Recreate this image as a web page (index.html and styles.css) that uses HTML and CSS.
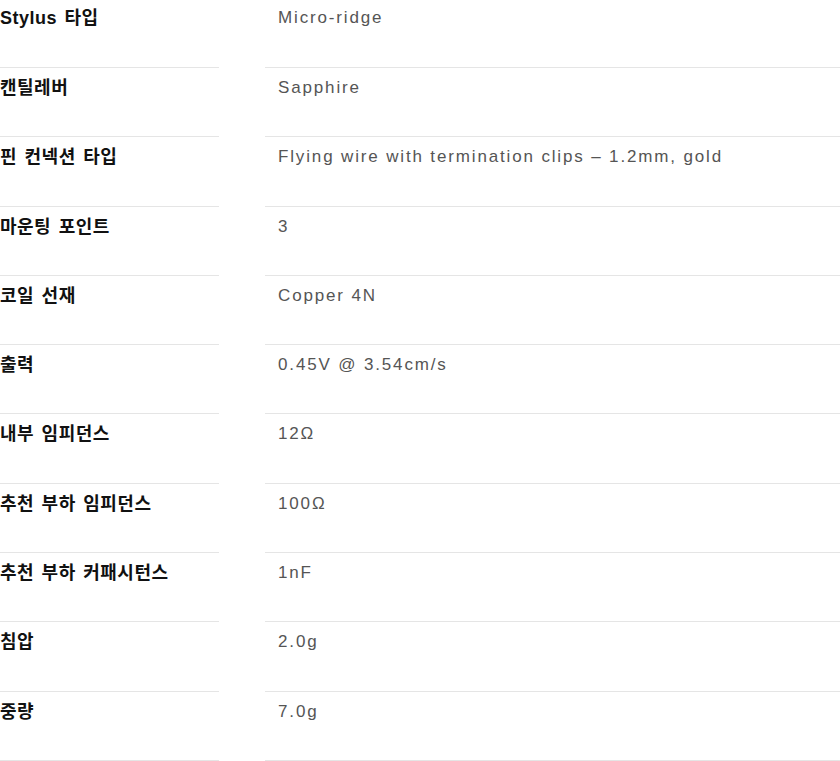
FILE: index.html
```html
<!DOCTYPE html>
<html lang="ko">
<head>
<meta charset="utf-8">
<title>Spec</title>
<link rel="stylesheet" href="styles.css">
</head>
<body>
<dl class="spec">
  <dt class="label first">Stylus 타입</dt><dd class="value first">Micro-ridge</dd>
  <dt class="label">캔틸레버</dt><dd class="value">Sapphire</dd>
  <dt class="label">핀 컨넥션 타입</dt><dd class="value">Flying wire with termination clips – 1.2mm, gold</dd>
  <dt class="label">마운팅 포인트</dt><dd class="value">3</dd>
  <dt class="label">코일 선재</dt><dd class="value">Copper 4N</dd>
  <dt class="label">출력</dt><dd class="value">0.45V @ 3.54cm/s</dd>
  <dt class="label">내부 임피던스</dt><dd class="value">12Ω</dd>
  <dt class="label">추천 부하 임피던스</dt><dd class="value">100Ω</dd>
  <dt class="label">추천 부하 커패시턴스</dt><dd class="value">1nF</dd>
  <dt class="label">침압</dt><dd class="value">2.0g</dd>
  <dt class="label">중량</dt><dd class="value">7.0g</dd>
</dl>
</body>
</html>
```
FILE: styles.css
```css
html, body {
  margin: 0;
  padding: 0;
  background: #fff;
}
.spec {
  margin: 0;
  display: grid;
  grid-template-columns: 219px 1fr;
  column-gap: 46px;
}
.label, .value {
  margin: 0;
  padding: 8px 0 36.3px;
  line-height: 24px;
  border-bottom: 1px solid #e5e5e5;
}
.first {
  padding-top: 6px;
  padding-bottom: 37px;
}
.label {
  font-family: "Liberation Sans", "Noto Sans CJK KR", sans-serif;
  font-weight: bold;
  font-size: 18px;
  letter-spacing: 0.5px;
  color: #111;
  word-spacing: 2px;
}
.value {
  padding-left: 13px;
  font-family: "Liberation Sans", "Noto Sans CJK KR", sans-serif;
  font-size: 17px;
  letter-spacing: 1.85px;
  color: #555;
}
```
